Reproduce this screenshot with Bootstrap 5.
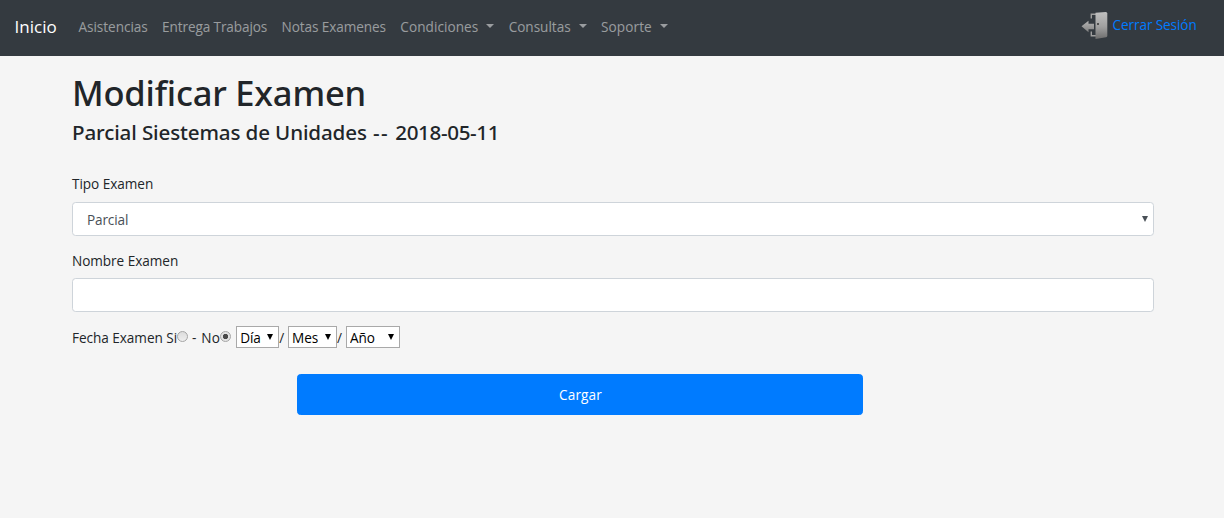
<!DOCTYPE html>
<html lang="es">
<head>
<meta charset="utf-8">
<meta name="viewport" content="width=device-width, initial-scale=1">
<title>Modificar Examen</title>
<link href="https://cdn.jsdelivr.net/npm/bootstrap@5.3.0/dist/css/bootstrap.min.css" rel="stylesheet">
<style>
html{font-size:14.4px}
body{font-family:"Open Sans","Noto Sans",sans-serif;font-size:13.6px;line-height:21.6px;letter-spacing:-.05px;background:#f5f5f5;color:#212529}
.top-bar{height:56px;background:#343a40;padding:0 14.4px}
.top-bar .navbar-brand{font-size:17px;letter-spacing:.06px;margin-right:14.4px;padding:0 0 4px;line-height:27px;color:#fff}
.top-bar .nav{padding-bottom:2px}
.top-bar .nav-link{color:rgba(255,255,255,.5);padding:7.2px;line-height:21.6px}
.top-bar .dropdown-toggle::after{margin-left:8px;border-width:4.3px;border-bottom:0;vertical-align:4.5px}
.logout{color:#007bff;letter-spacing:-.11px;margin-right:13px;margin-bottom:5px}
.logout span{padding-bottom:2px}
.page{width:1082px;margin-left:72px;padding-top:16px}
.page h1,.page h4{font-family:"Noto Sans",sans-serif;font-weight:500;line-height:1.2}
.page h1{font-size:34.5px;letter-spacing:-.2px;margin-bottom:5px;height:43px}
.page h4{font-size:20.6px;letter-spacing:-.14px;margin:0;height:28px}
.page h4 .dashes{letter-spacing:1.4px;margin-left:1px}
.page h4 .exam-date{letter-spacing:-.35px;margin-left:1px}
.page form{margin-top:25px}
.field-label{display:block;height:22px;margin-bottom:7px}
.page .form-control,.page .wide-select{height:34px;border:1px solid #ced4da;border-radius:3.6px;color:#495057;font-size:13.6px;padding:0 14px;background-color:#fff}
.page .wide-select{display:block;width:100%;appearance:none;letter-spacing:-.15px;padding-top:2px}
.arrow-box{position:relative;display:inline-block}
.arrow-box::after{content:"";position:absolute;pointer-events:none;border:solid transparent;border-width:6px 3.5px 0;border-top-color:#000}
.arrow-box.wide{display:block}
.arrow-box.wide::after{right:6px;top:14px;border-width:6px 3px 0;border-top-color:#495057}
.arrow-box.mini{height:22px}
.arrow-box.mini::after{right:6px;top:8px}
.mini-select{display:block;appearance:none;height:22px;border:1px solid #a9a9a9;border-radius:0;background:#fff;padding:0 3px;color:#000;line-height:21px;letter-spacing:-.05px}
.dot-radio{appearance:none;flex:none;width:11px;height:11px;border:1px solid #a5a5a5;border-radius:50%;background:linear-gradient(#dcdcdc,#eee);margin:0 0 1px}
.dot-radio:checked{background:radial-gradient(circle,#484848 0 2.3px,#e2e2e2 3px)}
.date-row{height:22px}
.date-row span{padding-top:2px}
.send-btn{width:566px;height:41px;margin:26px 0 0 225px;padding:2px 0 0 1px;background:#007bff;border-color:#007bff;border-radius:3.6px;font-size:13.6px;letter-spacing:.1px;color:#fff}
</style>
</head>
<body>
<nav class="top-bar d-flex align-items-center">
  <a class="navbar-brand" href="#">Inicio</a>
  <ul class="nav flex-nowrap me-auto text-nowrap">
    <li><a class="nav-link" href="#">Asistencias</a></li>
    <li><a class="nav-link" href="#" style="letter-spacing:-.12px">Entrega Trabajos</a></li>
    <li><a class="nav-link" href="#" style="letter-spacing:-.09px">Notas Examenes</a></li>
    <li><a class="nav-link dropdown-toggle" href="#" style="letter-spacing:.05px">Condiciones</a></li>
    <li><a class="nav-link dropdown-toggle" href="#" style="letter-spacing:-.02px">Consultas</a></li>
    <li><a class="nav-link dropdown-toggle" href="#" style="letter-spacing:.08px">Soporte</a></li>
  </ul>
  <a class="logout d-flex align-items-center text-decoration-none" href="#">
    <svg width="28" height="29" viewBox="0 0 28 29" style="margin-right:4px">
      <defs>
        <linearGradient id="door" x1="0" y1="0" x2="0" y2="1"><stop offset="0" stop-color="#c0c0c0"/><stop offset=".55" stop-color="#a0a0a0"/><stop offset="1" stop-color="#6d6d6d"/></linearGradient>
        <linearGradient id="arrow" x1="0" y1="0" x2="0" y2="1"><stop offset="0" stop-color="#b4b4b4"/><stop offset="1" stop-color="#808080"/></linearGradient>
      </defs>
      <path d="M10.300 7.500V3.200H15M10.300 20.500v4.300H15" fill="none" stroke="#a0a0a0" stroke-width="1.400"/>
      <path d="M14.500 1.800 24.800 1q1.500 0 1.500 1.500v22.300q0 1.200-1.200 1.500L14.500 28z" fill="url(#door)"/>
      <path d="M.5 15.300 7.500 9.800v3h5.500v5.400H7.500v3z" fill="url(#arrow)"/>
      <circle cx="17" cy="13" r="1" fill="#333"/>
    </svg>
    <span>Cerrar Sesión</span>
  </a>
</nav>
<main class="page">
  <h1>Modificar Examen</h1>
  <h4>Parcial Siestemas de Unidades <span class="dashes">--</span> <span class="exam-date">2018-05-11</span></h4>
  <form>
    <label class="field-label" for="tipo">Tipo Examen</label>
    <div class="arrow-box wide"><select class="wide-select" id="tipo"><option>Parcial</option></select></div>
    <label class="field-label" for="nombre" style="margin-top:14px;margin-bottom:6px">Nombre Examen</label>
    <input class="form-control" id="nombre" type="text">
    <div class="date-row d-flex align-items-center" style="margin-top:14px">
      <span>Fecha Examen Si</span><input class="dot-radio" type="radio" name="fecha" aria-label="Si">
      <span style="margin-left:4px;word-spacing:1px;letter-spacing:.2px">- No</span><input class="dot-radio" type="radio" name="fecha" aria-label="No" checked>
      <div class="arrow-box mini" style="margin-left:5px"><select class="mini-select" style="width:43px" aria-label="Día"><option>Día</option></select></div><span>/</span>
      <div class="arrow-box mini" style="margin-left:4px"><select class="mini-select" style="width:49px" aria-label="Mes"><option>Mes</option></select></div><span>/</span>
      <div class="arrow-box mini" style="margin-left:4px"><select class="mini-select" style="width:54px" aria-label="Año"><option>Año</option></select></div>
    </div>
    <button class="btn send-btn d-block" type="button">Cargar</button>
  </form>
</main>
<script src="https://cdn.jsdelivr.net/npm/bootstrap@5.3.0/dist/js/bootstrap.bundle.min.js"></script>
</body>
</html>
